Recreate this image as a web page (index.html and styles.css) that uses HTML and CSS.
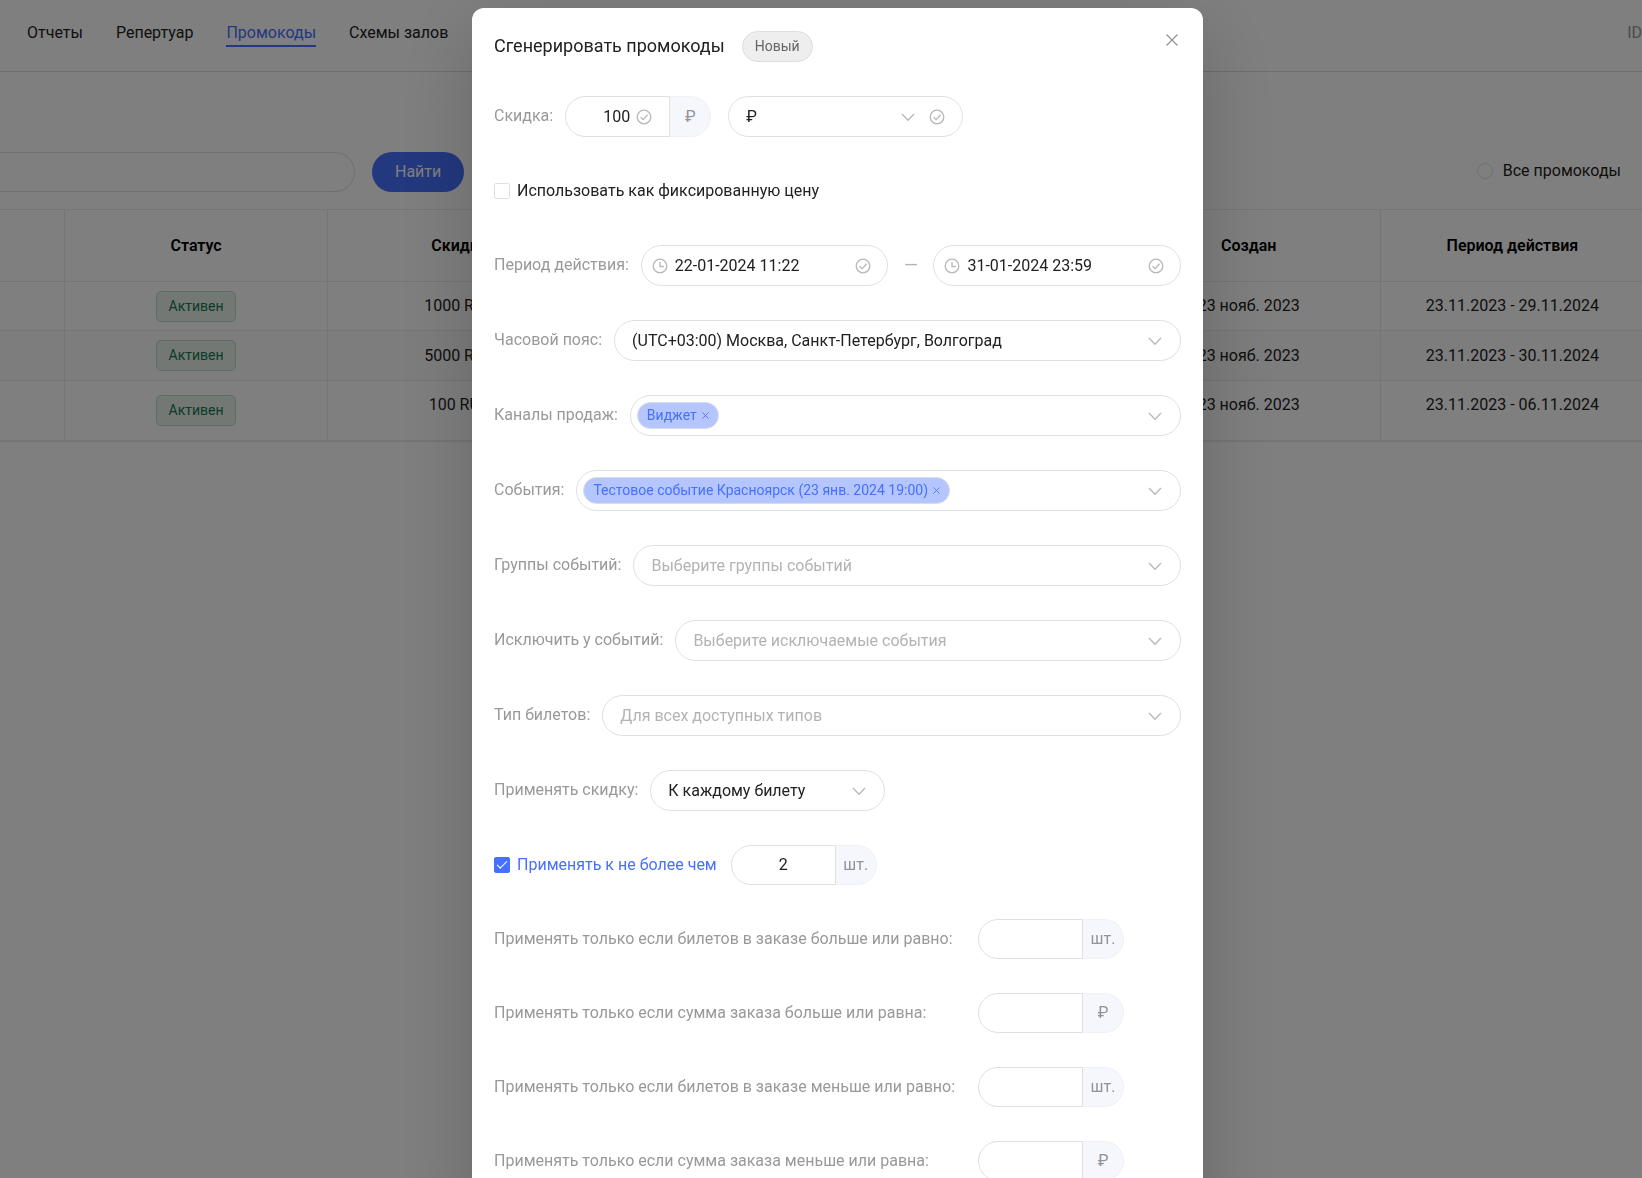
FILE: index.html
```html
<!DOCTYPE html>
<html lang="ru">
<head>
<meta charset="utf-8">
<meta name="viewport" content="width=device-width, initial-scale=1">
<title>Промокоды</title>
<link rel="stylesheet" href="styles.css">
</head>
<body>
<svg class="sprite" aria-hidden="true">
  <symbol id="check-circle" viewBox="0 0 16 16"><circle cx="8" cy="8" r="6.8"/><path d="M4.6 8.2 7.1 10.6 11.6 5.8"/></symbol>
  <symbol id="clock" viewBox="0 0 16 16"><circle cx="8" cy="8" r="6.8"/><path d="M8 3.8V8.5H11.8"/></symbol>
  <symbol id="chevron" viewBox="0 0 16 16"><path d="M2 5 8 11.2 14 5"/></symbol>
  <symbol id="cross" viewBox="0 0 16 16"><path d="M2.5 2.5 13.5 13.5M13.5 2.5 2.5 13.5"/></symbol>
</svg>

<header class="header">
  <nav class="nav">
    <a class="nav-link" href="#">Отчеты</a>
    <a class="nav-link" href="#">Репертуар</a>
    <a class="nav-link nav-link-active" href="#">Промокоды</a>
    <a class="nav-link" href="#">Схемы залов</a>
  </nav>
  <span class="account">ID</span>
</header>

<main>
  <div class="toolbar">
    <input class="search" type="text" aria-label="Поиск">
    <button class="find" type="button">Найти</button>
    <label class="filter"><input class="radio" type="radio" name="filter">Все промокоды</label>
  </div>
  <table class="table">
    <colgroup><col class="col-first"><col><col><col><col><col><col></colgroup>
    <thead>
      <tr><th></th><th>Статус</th><th>Скидка</th><th></th><th></th><th>Создан</th><th>Период действия</th></tr>
    </thead>
    <tbody>
      <tr><td></td><td><span class="status">Активен</span></td><td>1000 RUB</td><td></td><td></td><td>23 нояб. 2023</td><td>23.11.2023 - 29.11.2024</td></tr>
      <tr><td></td><td><span class="status">Активен</span></td><td>5000 RUB</td><td></td><td></td><td>23 нояб. 2023</td><td>23.11.2023 - 30.11.2024</td></tr>
      <tr class="row-tall"><td></td><td class="cell-status"><span class="status">Активен</span></td><td>100 RUB</td><td></td><td></td><td>23 нояб. 2023</td><td>23.11.2023 - 06.11.2024</td></tr>
    </tbody>
  </table>
</main>

<div class="overlay">
  <section class="modal" role="dialog" aria-labelledby="modal-title">
    <div class="modal-head">
      <h1 class="modal-title" id="modal-title">Сгенерировать промокоды</h1>
      <span class="badge">Новый</span>
      <button class="close" type="button" aria-label="Закрыть"><svg class="icon"><use href="#cross"/></svg></button>
    </div>
    <form class="form">
      <div class="row">
        <label class="label" for="discount">Скидка:</label>
        <div class="group">
          <div class="group-field">
            <input class="number number-right" id="discount" type="text" value="100">
            <svg class="icon"><use href="#check-circle"/></svg>
          </div>
          <span class="unit">₽</span>
        </div>
        <div class="field field-short field-after">
          <select class="select" aria-label="Валюта"><option>₽</option></select>
          <span class="field-icons"><svg class="icon"><use href="#chevron"/></svg><svg class="icon"><use href="#check-circle"/></svg></span>
        </div>
      </div>

      <div class="row row-low">
        <label class="check"><input class="checkbox" type="checkbox">Использовать как фиксированную цену</label>
      </div>

      <div class="row">
        <label class="label" for="date-from">Период действия:</label>
        <div class="date">
          <svg class="icon"><use href="#clock"/></svg>
          <input class="date-input" id="date-from" type="text" value="22-01-2024 11:22">
          <svg class="icon"><use href="#check-circle"/></svg>
        </div>
        <span class="dash">—</span>
        <div class="date">
          <svg class="icon"><use href="#clock"/></svg>
          <input class="date-input" type="text" aria-label="Окончание периода" value="31-01-2024 23:59">
          <svg class="icon"><use href="#check-circle"/></svg>
        </div>
      </div>

      <div class="row">
        <label class="label" for="zone">Часовой пояс:</label>
        <div class="field">
          <select class="select" id="zone"><option>(UTC+03:00) Москва, Санкт-Петербург, Волгоград</option></select>
          <span class="field-icons"><svg class="icon"><use href="#chevron"/></svg></span>
        </div>
      </div>

      <div class="row">
        <span class="label">Каналы продаж:</span>
        <div class="field">
          <div class="tags">
            <span class="tag">Виджет<button class="tag-remove" type="button" aria-label="Убрать"><svg class="icon icon-small"><use href="#cross"/></svg></button></span>
          </div>
          <span class="field-icons"><svg class="icon"><use href="#chevron"/></svg></span>
        </div>
      </div>

      <div class="row">
        <span class="label">События:</span>
        <div class="field">
          <div class="tags">
            <span class="tag">Тестовое событие Красноярск (23 янв. 2024 19:00)<button class="tag-remove" type="button" aria-label="Убрать"><svg class="icon icon-small"><use href="#cross"/></svg></button></span>
          </div>
          <span class="field-icons"><svg class="icon"><use href="#chevron"/></svg></span>
        </div>
      </div>

      <div class="row">
        <label class="label" for="groups">Группы событий:</label>
        <div class="field">
          <select class="select select-empty" id="groups"><option>Выберите группы событий</option></select>
          <span class="field-icons"><svg class="icon"><use href="#chevron"/></svg></span>
        </div>
      </div>

      <div class="row">
        <label class="label" for="exclude">Исключить у событий:</label>
        <div class="field">
          <select class="select select-empty" id="exclude"><option>Выберите исключаемые события</option></select>
          <span class="field-icons"><svg class="icon"><use href="#chevron"/></svg></span>
        </div>
      </div>

      <div class="row">
        <label class="label" for="types">Тип билетов:</label>
        <div class="field">
          <select class="select select-empty" id="types"><option>Для всех доступных типов</option></select>
          <span class="field-icons"><svg class="icon"><use href="#chevron"/></svg></span>
        </div>
      </div>

      <div class="row">
        <label class="label" for="apply">Применять скидку:</label>
        <div class="field field-short">
          <select class="select" id="apply"><option>К каждому билету</option></select>
          <span class="field-icons"><svg class="icon"><use href="#chevron"/></svg></span>
        </div>
      </div>

      <div class="row row-low">
        <label class="check check-on"><input class="checkbox" type="checkbox" checked>Применять к не более чем</label>
        <div class="group group-after">
          <div class="group-field"><input class="number" type="text" aria-label="Количество" value="2"></div>
          <span class="unit">шт.</span>
        </div>
      </div>

      <div class="row row-low">
        <label class="label label-wide" for="count-min">Применять только если билетов в заказе больше или равно:</label>
        <div class="group">
          <div class="group-field"><input class="number" id="count-min" type="text"></div>
          <span class="unit">шт.</span>
        </div>
      </div>

      <div class="row row-low">
        <label class="label label-wide" for="sum-min">Применять только если сумма заказа больше или равна:</label>
        <div class="group">
          <div class="group-field"><input class="number" id="sum-min" type="text"></div>
          <span class="unit">₽</span>
        </div>
      </div>

      <div class="row row-low">
        <label class="label label-wide" for="count-max">Применять только если билетов в заказе меньше или равно:</label>
        <div class="group">
          <div class="group-field"><input class="number" id="count-max" type="text"></div>
          <span class="unit">шт.</span>
        </div>
      </div>

      <div class="row row-low">
        <label class="label label-wide" for="sum-max">Применять только если сумма заказа меньше или равна:</label>
        <div class="group">
          <div class="group-field"><input class="number" id="sum-max" type="text"></div>
          <span class="unit">₽</span>
        </div>
      </div>
    </form>
  </section>
</div>
</body>
</html>
```
FILE: styles.css
```css
*, *::before, *::after { box-sizing: border-box; }

body {
  margin: 0;
  background: #fff;
  color: #212121;
  font: 16px/24px Roboto, sans-serif;
  overflow: hidden;
}

input, select, button { font: inherit; color: inherit; }

.sprite { display: none; }

.icon {
  width: 16px;
  height: 16px;
  flex: none;
  fill: none;
  stroke: #b8b8b8;
  stroke-width: 1.3;
}

.icon-small { width: 9px; height: 9px; stroke: #4670ff; stroke-width: 1.5; }

/* Page */

.header {
  display: flex;
  justify-content: space-between;
  align-items: flex-start;
  padding: 20px 0 24px 27px;
  border-bottom: 1px solid #dedede;
}

.nav { display: flex; gap: 33px; }

.nav-link {
  line-height: 25px;
  color: #212121;
  text-decoration: none;
  border-bottom: 2px solid transparent;
}

.nav-link-active { color: #4670ff; border-color: #4670ff; }

.account { line-height: 25px; color: #999; }

.toolbar { display: flex; align-items: center; padding: 80px 21px 17px 0; }

.search {
  width: 355px;
  height: 40px;
  padding: 0 18px;
  background: none;
  border: 1px solid #e0e0e0;
  border-left: 0;
  border-radius: 0 20px 20px 0;
}

.find {
  height: 40px;
  margin-left: 17px;
  padding: 0 23px;
  border: 0;
  border-radius: 20px;
  background: #4670ff;
  color: #fff;
}

.filter { display: flex; align-items: center; gap: 10px; margin-left: auto; padding-bottom: 2px; }

.radio {
  appearance: none;
  width: 16px;
  height: 16px;
  margin: 0;
  border: 1px solid #e0e0e0;
  border-radius: 50%;
}

.table {
  width: calc(100% + 2px);
  table-layout: fixed;
  border-spacing: 0;
  border-bottom: 1px solid #ebebeb;
  text-align: center;
}

.col-first { width: 65px; }

.table th, .table td {
  padding: 0;
  height: 50px;
  border: solid #ebebeb;
  border-width: 0 1px 1px 0;
}

.table th { height: 73px; border-top-width: 1px; font-weight: 600; color: #000; }
.table tr > :last-child { border-right: 0; }
.table tbody tr:first-child td { height: 49px; }
.table tr:nth-child(2) td { background: #fafafa; }
.table .row-tall td { height: 60px; padding-bottom: 12px; }
.table .row-tall .cell-status { padding-bottom: 0; }

.status {
  display: block;
  width: 80px;
  margin: 0 auto;
  line-height: 29px;
  border: 1px solid #bcdcca;
  border-radius: 5px;
  background: #e6f0ea;
  color: #18794e;
  font-size: 14px;
}

/* Dialog */

.overlay {
  position: fixed;
  inset: 0;
  display: flex;
  justify-content: center;
  align-items: flex-start;
  padding: 8px 0 0 33px;
  background: rgba(0, 0, 0, .5);
  overflow: hidden;
}

.modal {
  width: 100%;
  max-width: 731px;
  padding: 20px 22px 34px;
  border-radius: 12px;
  background: #fff;
  box-shadow: 0 24px 80px rgba(0, 0, 0, .2);
}

.modal-head { display: flex; align-items: center; height: 36px; margin-bottom: 32px; }

.modal-title { margin: 0; font-size: 18px; font-weight: 400; }

.badge {
  margin-left: 17px;
  padding: 0 12px;
  line-height: 29px;
  border: 1px solid #ddd;
  border-radius: 16px;
  background: #eee;
  color: #666;
  font-size: 14px;
}

.close {
  display: flex;
  align-self: flex-start;
  margin-left: auto;
  padding: 4px 1px;
  border: 0;
  background: none;
}

.close .icon { stroke: #909399; stroke-width: 1.2; }

.form { display: flex; flex-direction: column; gap: 34px; }

.row { display: flex; align-items: stretch; height: 41px; }
.row-low { height: 40px; }

.label { flex: none; padding-right: 12px; line-height: 39px; color: #999; white-space: nowrap; }
.label-wide { width: 484px; }

.field {
  display: grid;
  flex: 1;
  border: 1px solid #e0e0e0;
  border-radius: 21px;
}

.field-short { flex: 0 0 235px; }
.field-after { margin-left: 17px; }
.field > * { grid-area: 1 / 1; }

.select {
  appearance: none;
  width: 100%;
  padding: 0 44px 0 17px;
  border: 0;
  border-radius: 21px;
  background: none;
}

.select-empty { color: #b3b3b3; }

.field-icons {
  display: flex;
  align-items: center;
  justify-self: end;
  gap: 13px;
  padding-right: 17px;
  pointer-events: none;
}

.tags { display: flex; align-items: center; padding-left: 6px; }

.tag {
  display: flex;
  align-items: center;
  gap: 4px;
  padding: 0 8px 0 9px;
  line-height: 25px;
  border: 1px solid #d9dcea;
  border-radius: 14px;
  background: #b5c6ff;
  color: #4670ff;
  font-size: 14px;
}

.tag-remove { display: flex; padding: 0; border: 0; background: none; }

.date {
  display: flex;
  flex: 1;
  align-items: center;
  min-width: 0;
  padding: 0 16px 0 10px;
  border: 1px solid #e0e0e0;
  border-radius: 21px;
}

.date-input {
  flex: 1;
  min-width: 0;
  padding: 0 7px;
  border: 0;
  background: none;
}

.dash { flex: none; width: 45px; line-height: 39px; text-align: center; color: #b3b3b3; font-size: 18px; }

.check { display: flex; align-items: center; gap: 7px; line-height: 39px; padding-bottom: 1px; }
.check-on { color: #4670ff; }

.checkbox {
  appearance: none;
  display: grid;
  place-items: center;
  width: 16px;
  height: 16px;
  margin: 0;
  border: 1px solid #e0e0e0;
  border-radius: 2px;
}

.checkbox:checked { border-color: #4670ff; background: #4670ff; }

.checkbox:checked::before {
  content: "";
  width: 10px;
  height: 5px;
  margin-bottom: 3px;
  border: solid #fff;
  border-width: 0 0 1px 1px;
  rotate: -45deg;
}

.group { display: flex; }
.group-after { margin-left: 14px; }

.group-field {
  display: flex;
  align-items: center;
  width: 105px;
  padding: 0 17px;
  border: 1px solid #e0e0e0;
  border-radius: 21px 0 0 21px;
}

.number {
  flex: 1;
  width: 100%;
  min-width: 0;
  padding: 0;
  border: 0;
  background: none;
  text-align: center;
}

.number-right { padding-right: 6px; text-align: right; }

.unit {
  display: grid;
  place-items: center;
  width: 41px;
  border: 1px solid #eff1f7;
  border-left: 0;
  border-radius: 0 21px 21px 0;
  background: #f5f7fc;
  color: #909399;
}
```
